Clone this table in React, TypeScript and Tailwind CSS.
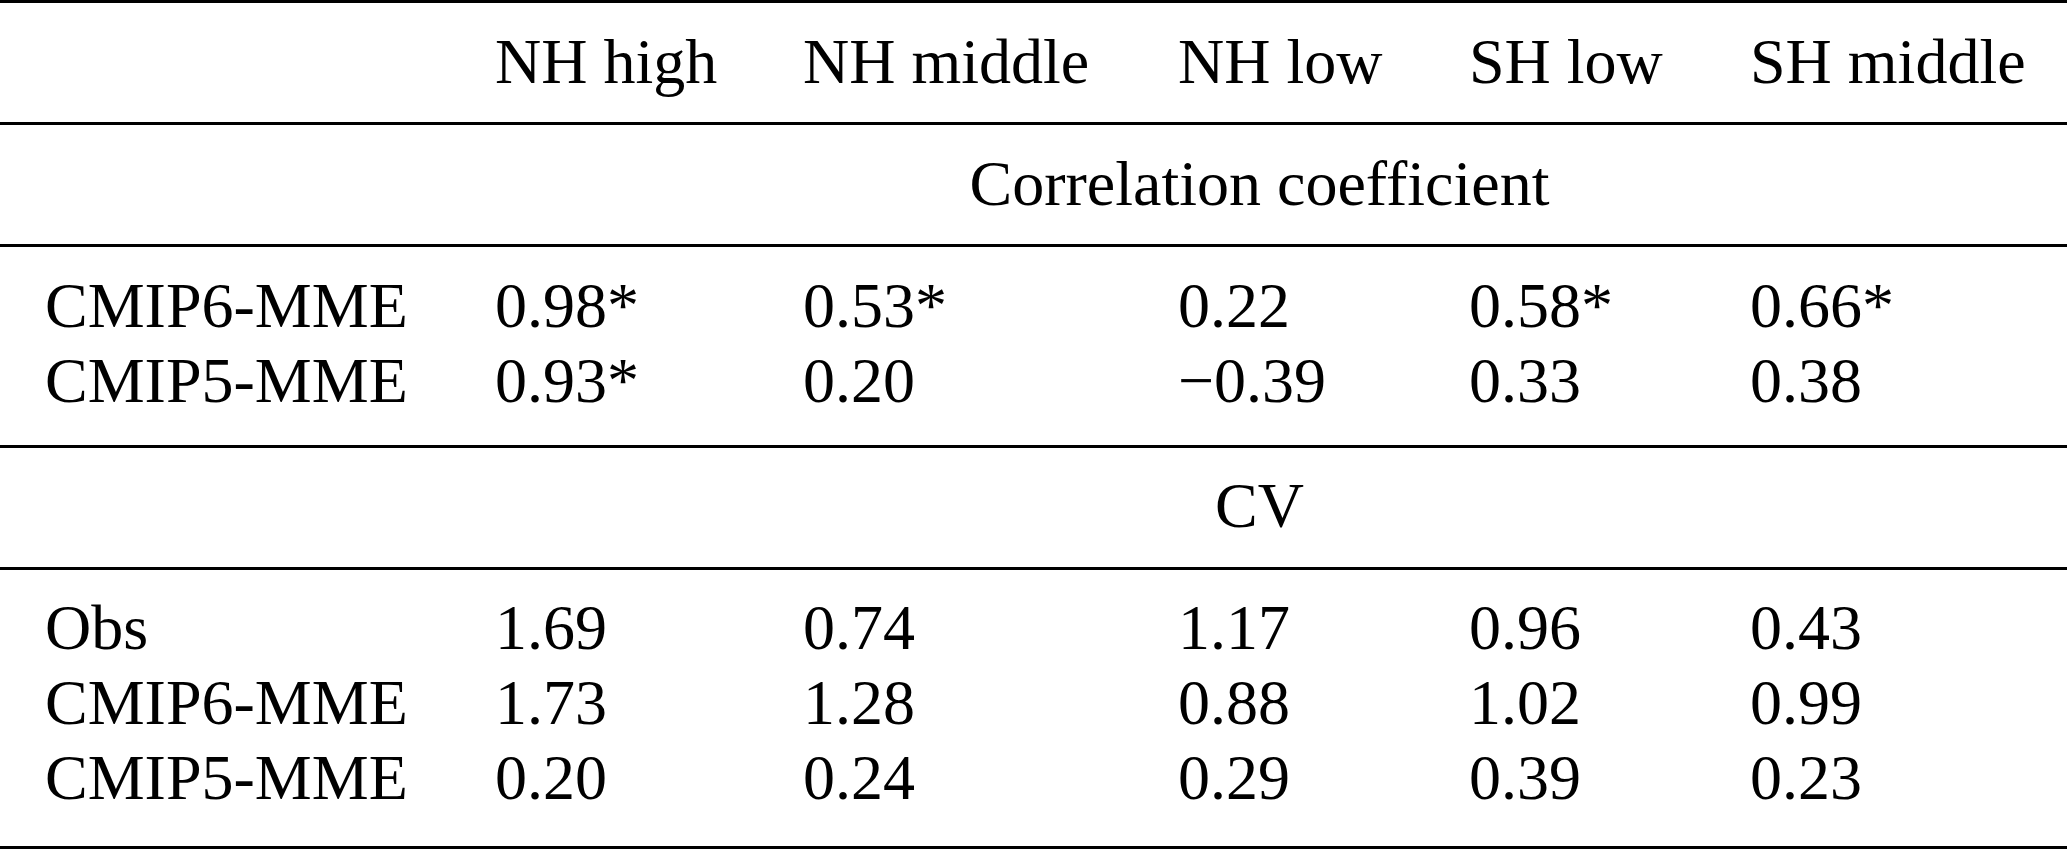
import React from "react";

const cols = "grid grid-cols-[450px_308px_375px_291px_281px_1fr]";

const pbByRows: Record<number, string> = {
  1: "pb-[23.25px]",
  2: "pb-[26.75px]",
  3: "pb-[30.25px]",
};

function Line() {
  return <div className="h-[3px] w-full bg-black" />;
}

function Cell({ v }: { v: string }) {
  return <div className="whitespace-nowrap">{v}</div>;
}

function Group({ rows }: { rows: string[][] }) {
  return (
    <div className={"pt-[20.75px] pl-[45px] pr-[43px] " + pbByRows[rows.length]}>
      {rows.map((r, i) => (
        <div key={i} className={cols}>
          {r.map((c, j) => (
            <Cell key={j} v={c} />
          ))}
        </div>
      ))}
    </div>
  );
}

function Span({ label }: { label: string }) {
  return (
    <div className="pt-[20.75px] pb-[23.25px] pl-[45px] pr-[43px]">
      <div className={cols}>
        <div />
        <div className="col-span-5 text-center">{label}</div>
      </div>
    </div>
  );
}

export default function App() {
  return (
    <div
      className="w-[2067px] h-[851px] bg-white text-black text-[64px] leading-[75px] overflow-hidden"
      style={{ fontFamily: '"Liberation Serif", "Times New Roman", serif' }}
    >
      <Line />
      <Group rows={[["", "NH high", "NH middle", "NH low", "SH low", "SH middle"]]} />
      <Line />
      <Span label="Correlation coefficient" />
      <Line />
      <Group
        rows={[
          ["CMIP6-MME", "0.98*", "0.53*", "0.22", "0.58*", "0.66*"],
          ["CMIP5-MME", "0.93*", "0.20", "\u22120.39", "0.33", "0.38"],
        ]}
      />
      <Line />
      <Span label="CV" />
      <Line />
      <Group
        rows={[
          ["Obs", "1.69", "0.74", "1.17", "0.96", "0.43"],
          ["CMIP6-MME", "1.73", "1.28", "0.88", "1.02", "0.99"],
          ["CMIP5-MME", "0.20", "0.24", "0.29", "0.39", "0.23"],
        ]}
      />
      <Line />
    </div>
  );
}
